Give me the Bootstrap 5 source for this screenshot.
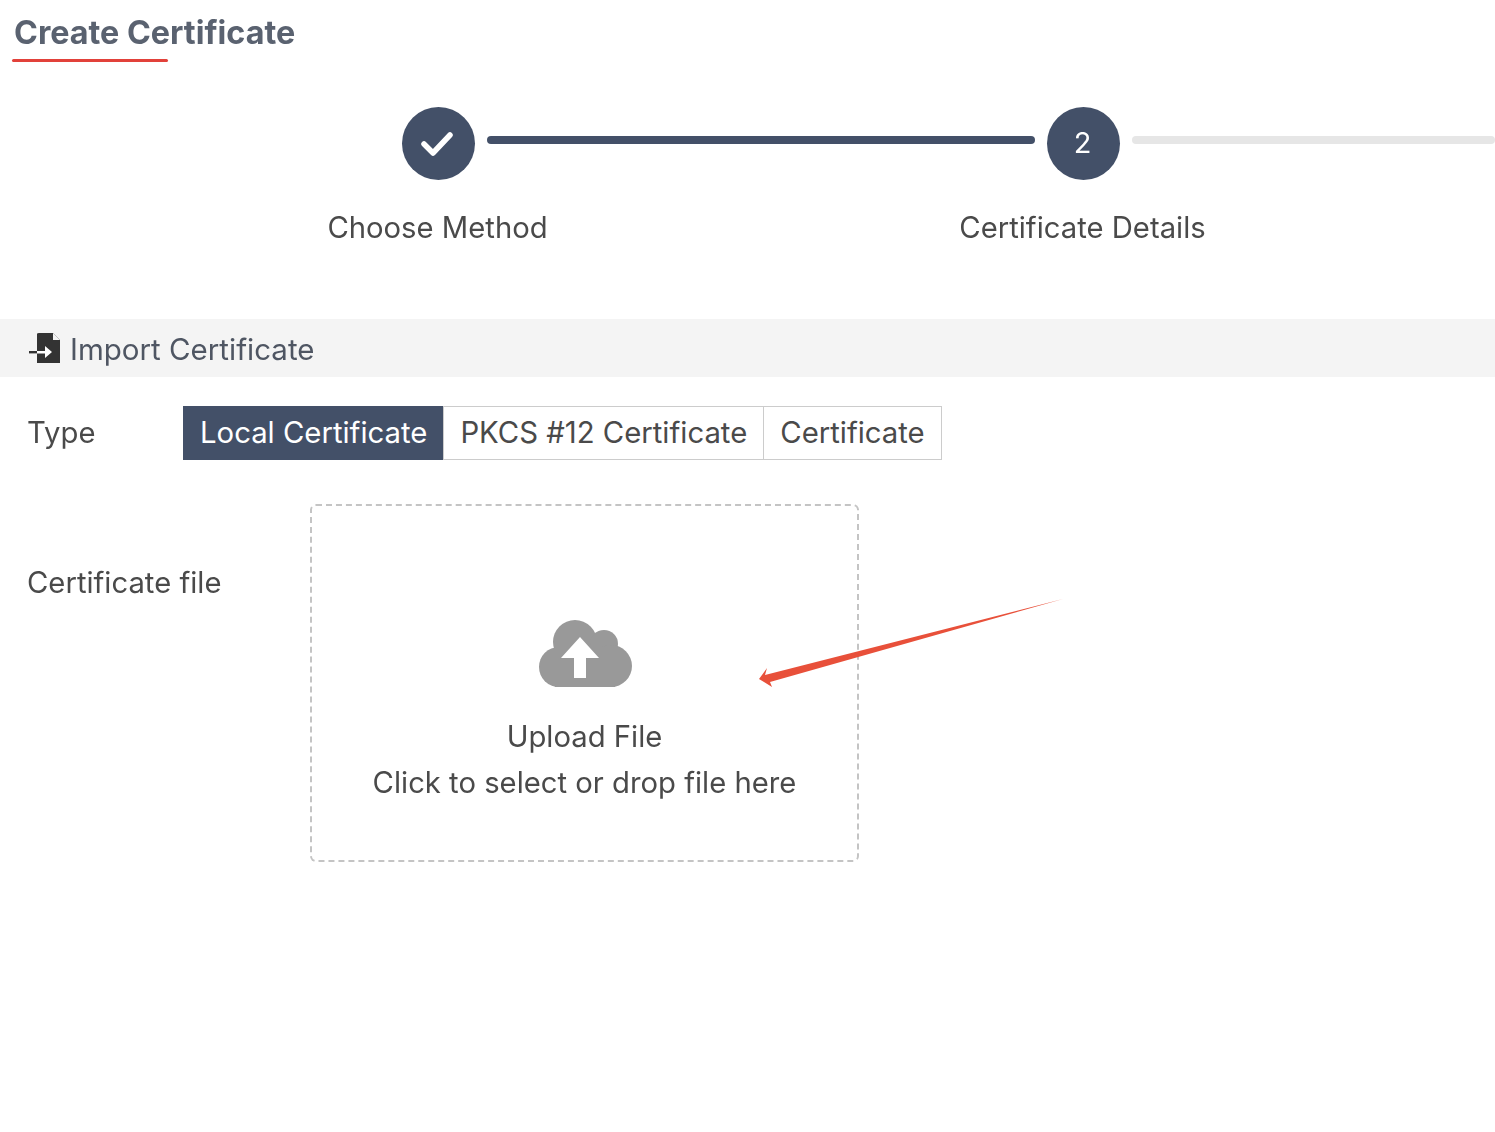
<!DOCTYPE html>
<html lang="en">
<head>
<meta charset="utf-8">
<title>Create Certificate</title>
<link href="https://cdn.jsdelivr.net/npm/bootstrap@5.3.0/dist/css/bootstrap.min.css" rel="stylesheet">
<style>
html,body{height:100%}
body{font-family:Inter,"Liberation Sans",sans-serif;font-size:29.25px;color:#4a4a4a;background:#fff;overflow:hidden;position:relative;min-height:1132px}
.stage{filter:blur(.45px)}
.title-wrap{padding:14px 0 0 12px;height:61px}
.page-title{display:block;font-size:32.3px;font-weight:700;line-height:38px;color:#5a6270;margin:0 0 0 2px}
.title-rule{width:156px;height:3px;border-radius:2px;background:#e2413a;margin-top:7px}
.track{padding:46px 0 0 402px}
.disc{flex:0 0 73px;width:73px;height:73px;border-radius:50%;background:#435068;color:#fff;font-size:29px}
.digit{margin:-1px 2px 0 0}
.tick{margin-right:4px}
.bar{height:8px;margin:29px 12px 0;border-radius:4px}
.bar-done{flex:0 0 548px;background:#435068}
.bar-todo{flex:1 1 auto;margin-right:0;background:#e6e6e6}
.labels{padding:29px 0 0 115px}
.step-label{flex:0 0 645px;width:645px;text-align:center;line-height:38px}
.section-head{margin-top:72px;height:58px;background:#f4f4f4;padding-left:29px;gap:8px;color:#4f5663;font-size:29.5px}
.section-text{padding-top:3px}
.row-type{margin-top:29px;padding-left:27px}
.field-name{flex:0 0 156px;line-height:54px}
.seg .btn{font-size:29.3px;line-height:36px;padding:8px 16px;border-radius:0;border:1px solid #ccc;color:#4a4a4a;background:#fff;font-weight:400}
.seg .btn.on{background:#435068;border-color:#435068;color:#fff}
.row-file{margin-top:44px;padding-left:27px}
.field-file{flex:0 0 283px;padding-top:60px;line-height:38px}
.dropzone{width:549px;height:358px;border:2px dashed #c4c4c4;border-radius:6px;padding-top:114px;text-align:center;line-height:46px;color:#4a4a4a}
.cloud{display:block;margin:0 auto 26px}
.pointer{position:absolute;left:0;top:0;pointer-events:none}
</style>
</head>
<body>
<div class="stage">
<div class="title-wrap">
  <h1 class="page-title">Create Certificate</h1>
  <div class="title-rule"></div>
</div>
<div class="track d-flex">
  <div class="disc d-flex align-items-center justify-content-center">
    <svg class="tick" width="32" height="26" viewBox="0 0 32 26"><path d="M3 13l9 9L29 4" fill="none" stroke="#fff" stroke-width="5.5" stroke-linecap="round" stroke-linejoin="round"/></svg>
  </div>
  <div class="bar bar-done"></div>
  <div class="disc d-flex align-items-center justify-content-center"><span class="digit">2</span></div>
  <div class="bar bar-todo"></div>
</div>
<div class="labels d-flex">
  <div class="step-label">Choose Method</div>
  <div class="step-label">Certificate Details</div>
</div>
<div class="section-head d-flex align-items-center">
  <svg width="33" height="33" viewBox="0 0 33 33"><path fill="#333" d="M10 1h14l7 7v23H8V2q0-1 2-1z"/><path fill="#f4f4f4" d="M24 1v7h7z"/><path fill="#333" d="M0 19h8v2.4H0z"/><path fill="#fff" d="M8 19h8v-5l7 6-7 6v-4.600H8z"/></svg>
  <span class="section-text">Import Certificate</span>
</div>
<div class="row-type d-flex">
  <div class="field-name">Type</div>
  <div class="seg btn-group" role="group">
    <button type="button" class="btn on">Local Certificate</button>
    <button type="button" class="btn">PKCS #12 Certificate</button>
    <button type="button" class="btn">Certificate</button>
  </div>
</div>
<div class="row-file d-flex">
  <div class="field-file">Certificate file</div>
  <div class="dropzone">
    <svg class="cloud" width="96" height="68" viewBox="-2 0 96 68"><g fill="#999"><circle cx="36" cy="22" r="22"/><circle cx="65" cy="24" r="14"/><circle cx="20" cy="47" r="20"/><circle cx="72" cy="46" r="21"/><path d="M16 27h60v40H16z"/></g><path fill="#fff" d="M41 17L22 38h13v20h12V38h13z"/></svg>
    <div>Upload File</div>
    <div>Click to select or drop file here</div>
  </div>
</div>
</div>
<svg class="pointer" width="1495" height="1132" viewBox="0 0 1495 1132"><polygon fill="#e8503a" points="1063,599 765,675 767,668 759,679 772,687 770,682"/></svg>
<script src="https://cdn.jsdelivr.net/npm/bootstrap@5.3.0/dist/js/bootstrap.bundle.min.js"></script>
</body>
</html>
